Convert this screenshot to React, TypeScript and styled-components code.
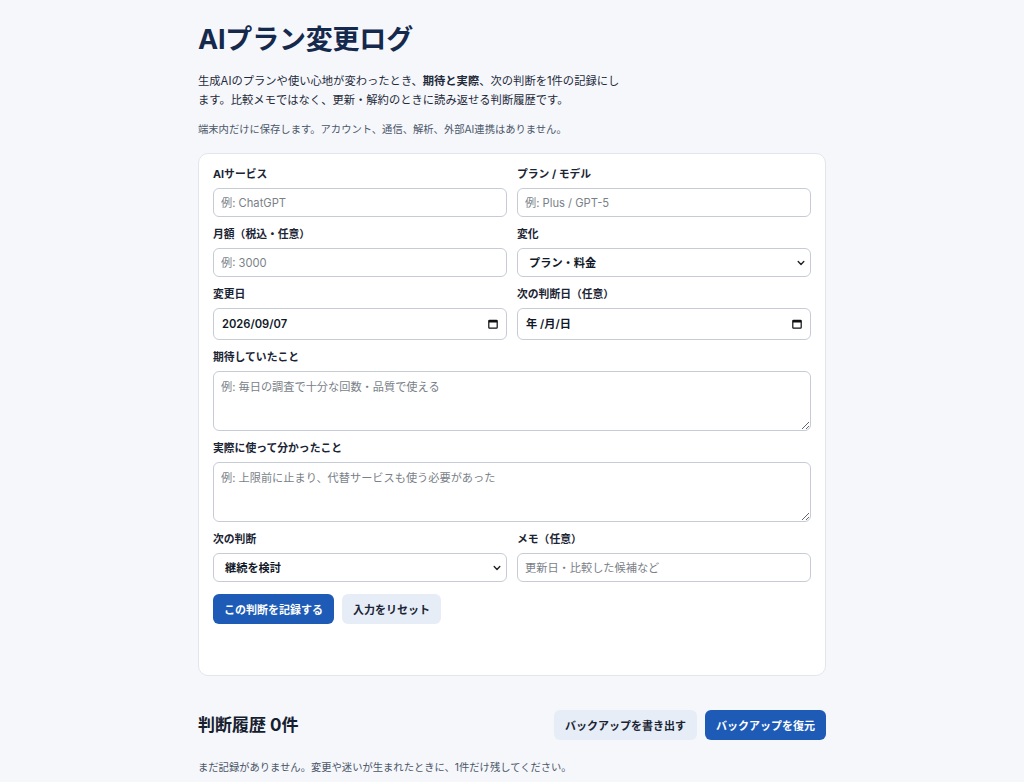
import * as React from 'react'
import styled, { createGlobalStyle } from 'styled-components'

const GlobalStyle = createGlobalStyle`
    * { box-sizing: border-box; }
    body {
        margin: 0;
        background: #f5f7fb;
        color: #1f2a3a;
        font-family: "Inter", "Noto Sans CJK JP", sans-serif;
    }
`

const Page = styled.main`
    width: 628px;
    margin: 0 auto;
    padding: 22px 0 0;
`
const Title = styled.h1`
    margin: 0 0 14px;
    font-size: 27px;
    line-height: 36px;
    font-weight: 700;
    color: #15294d;
    letter-spacing: -0.2px;
`
const Lead = styled.p`
    margin: 0 0 11px;
    max-width: 432px;
    font-size: 11.3px;
    line-height: 19px;
    color: #1f2a3a;

    strong { font-weight: 700; }
`
const Note = styled.p`
    margin: 0 0 16px;
    font-size: 10.3px;
    line-height: 16px;
    color: #4b5668;
`
const Card = styled.form`
    background: #ffffff;
    border: 1px solid #e1e6ee;
    border-radius: 10px;
    padding: 13px 14px 14px;
`
const Grid = styled.div`
    display: grid;
    grid-template-columns: 1fr 1fr;
    gap: 10px 10px;
`
const Field = styled.label<{ $wide?: boolean }>`
    display: flex;
    flex-direction: column;
    gap: 5px;
    grid-column: ${p => (p.$wide ? '1 / -1' : 'auto')};
`
const LabelText = styled.span`
    font-size: 10.8px;
    line-height: 16px;
    font-weight: 700;
    color: #1a2433;
`
const controlBase = `
    width: 100%;
    border: 1px solid #c6ccd6;
    border-radius: 6px;
    background: #ffffff;
    font-family: "Inter", "Noto Sans CJK JP", sans-serif;
    font-size: 11.2px;
    color: #111827;
    outline: none;
    &::placeholder { color: #7a7f88; }
`
const Input = styled.input`
    ${controlBase}
    height: 29px;
    padding: 0 7px;
`
const DateWrap = styled.div`
    position: relative;
`
const DateInput = styled.input`
    ${controlBase}
    height: 32px;
    padding: 0 28px 0 8px;
    font-weight: 600;
    &::placeholder { color: #111827; }
`
const CalendarIcon = styled.svg`
    position: absolute;
    right: 9px;
    top: 11px;
    width: 10px;
    height: 10px;
    pointer-events: none;
`
const TextArea = styled.textarea`
    ${controlBase}
    height: 60px;
    padding: 7px 7px;
    resize: vertical;
    line-height: 16px;
`
const SelectWrap = styled.div`
    position: relative;
`
const Select = styled.select`
    ${controlBase}
    height: 29px;
    padding: 0 24px 0 11px;
    font-weight: 700;
    appearance: none;
`
const Chevron = styled.svg`
    position: absolute;
    right: 6px;
    top: 11px;
    width: 8px;
    height: 8px;
    pointer-events: none;
`
const Actions = styled.div`
    display: flex;
    gap: 8px;
    margin-top: 12px;
`
const Button = styled.button<{ $primary?: boolean }>`
    height: 30px;
    padding: 0 11px;
    border: none;
    border-radius: 6px;
    font-family: "Inter", "Noto Sans CJK JP", sans-serif;
    font-size: 11px;
    font-weight: 700;
    cursor: pointer;
    background: ${p => (p.$primary ? '#1d5bb6' : '#e6edf7')};
    color: ${p => (p.$primary ? '#ffffff' : '#1a2433')};
`
const Status = styled.p`
    margin: 0;
    min-height: 37px;
`
const HistoryHead = styled.div`
    display: flex;
    align-items: center;
    justify-content: space-between;
    margin-top: 34px;
`
const HistoryTitle = styled.h2`
    margin: 0;
    font-size: 17px;
    line-height: 24px;
    font-weight: 700;
    color: #15202e;
`
const HeadActions = styled.div`
    display: flex;
    gap: 8px;
`
const Empty = styled.p`
    margin: 19px 0 0;
    font-size: 10.3px;
    line-height: 16px;
    color: #4b5668;
`

const ChevronIcon = () => (
    <Chevron viewBox="0 0 8 8">
        <path d="M1.2 2.6 L4 5.4 L6.8 2.6" fill="none" stroke="#222" strokeWidth="1.4" strokeLinecap="round" strokeLinejoin="round" />
    </Chevron>
)

const Dropdown = ({ options }: { options: string[] }) => (
    <SelectWrap>
        <Select defaultValue={options[0]}>
            {options.map(o => <option key={o}>{o}</option>)}
        </Select>
        <ChevronIcon />
    </SelectWrap>
)

const DateField = ({ value }: { value?: string }) => (
    <DateWrap>
        <DateInput defaultValue={value} placeholder="年 /月/日" inputMode="numeric" />
        <CalendarIcon viewBox="0 0 10 10">
            <rect x="0.8" y="1.3" width="8.4" height="7.9" rx="0.8" fill="none" stroke="#111" strokeWidth="1.2" />
            <rect x="0.8" y="1.3" width="8.4" height="2.2" fill="#111" />
        </CalendarIcon>
    </DateWrap>
)

export default function App() {
    return (
        <>
            <GlobalStyle />
            <Page lang="ja">
                <Title>AIプラン変更ログ</Title>
                <Lead>
                    生成AIのプランや使い心地が変わったとき、<strong>期待と実際</strong>、次の判断を1件の記録にします。比較メモではなく、更新・解約のときに読み返せる判断履歴です。
                </Lead>
                <Note>端末内だけに保存します。アカウント、通信、解析、外部AI連携はありません。</Note>

                <Card onSubmit={e => e.preventDefault()}>
                    <Grid>
                        <Field>
                            <LabelText>AIサービス</LabelText>
                            <Input placeholder="例: ChatGPT" />
                        </Field>
                        <Field>
                            <LabelText>プラン / モデル</LabelText>
                            <Input placeholder="例: Plus / GPT-5" />
                        </Field>
                        <Field>
                            <LabelText>月額（税込・任意）</LabelText>
                            <Input placeholder="例: 3000" inputMode="numeric" />
                        </Field>
                        <Field as="div">
                            <LabelText>変化</LabelText>
                            <Dropdown options={['プラン・料金', '使い心地', 'モデル', 'その他']} />
                        </Field>
                        <Field as="div">
                            <LabelText>変更日</LabelText>
                            <DateField value="2026/09/07" />
                        </Field>
                        <Field as="div">
                            <LabelText>次の判断日（任意）</LabelText>
                            <DateField />
                        </Field>
                        <Field $wide>
                            <LabelText>期待していたこと</LabelText>
                            <TextArea placeholder="例: 毎日の調査で十分な回数・品質で使える" />
                        </Field>
                        <Field $wide>
                            <LabelText>実際に使って分かったこと</LabelText>
                            <TextArea placeholder="例: 上限前に止まり、代替サービスも使う必要があった" />
                        </Field>
                        <Field as="div">
                            <LabelText>次の判断</LabelText>
                            <Dropdown options={['継続を検討', '継続', '変更', '解約']} />
                        </Field>
                        <Field>
                            <LabelText>メモ（任意）</LabelText>
                            <Input placeholder="更新日・比較した候補など" />
                        </Field>
                    </Grid>
                    <Actions>
                        <Button $primary type="submit">この判断を記録する</Button>
                        <Button type="reset">入力をリセット</Button>
                    </Actions>
                    <Status aria-live="polite" />
                </Card>

                <section>
                    <HistoryHead>
                        <HistoryTitle>判断履歴 0件</HistoryTitle>
                        <HeadActions>
                            <Button type="button">バックアップを書き出す</Button>
                            <Button $primary type="button">バックアップを復元</Button>
                        </HeadActions>
                    </HistoryHead>
                    <Empty>まだ記録がありません。変更や迷いが生まれたときに、1件だけ残してください。</Empty>
                </section>
            </Page>
        </>
    )
}
